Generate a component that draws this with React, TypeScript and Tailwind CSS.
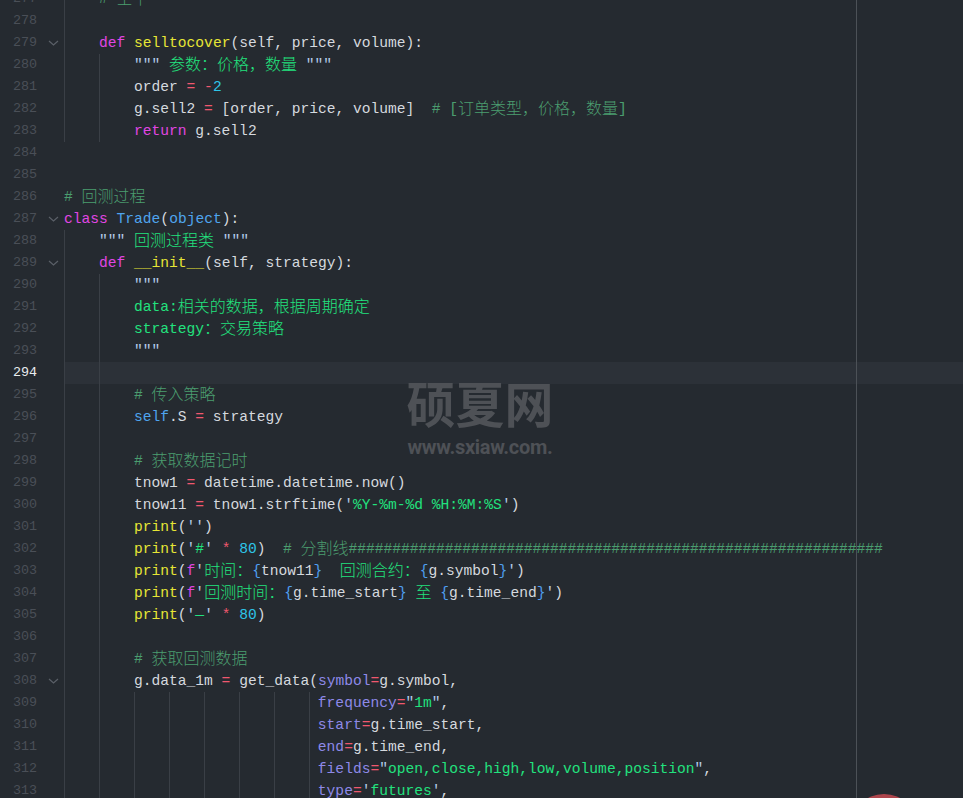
import React from "react";

type Tok = [string, string];

type Line = {
  n: number;
  ind?: number;
  g: number;
  t?: Tok[];
  fold?: boolean;
  hl?: boolean;
};

// token colours
const C: Record<string, string> = {
  w: "text-[#d5d9df]",
  kw: "text-[#e146e3]",
  fn: "text-[#e7e635]",
  op: "text-[#f0586e]",
  num: "text-[#2ec5e8]",
  s: "text-[#22e27e]",
  q: "text-[#b3cbe8]",
  cm: "text-[#4b9d6f]",
  cl: "text-[#4fa5ee]",
  br: "text-[#4f9ff0]",
  arg: "text-[#8e89e8]",
};

const GUIDE_W: Record<number, string> = {
  1: "w-[1ch]",
  2: "w-[2ch]",
  3: "w-[3ch]",
  4: "w-[4ch]",
};

const lines: Line[] = [
  { n: 277, ind: 4, g: 1, t: [["# 空平", "cm"]] },
  { n: 278, g: 1 },
  {
    n: 279,
    ind: 4,
    g: 1,
    fold: true,
    t: [
      ["def", "kw"],
      [" ", "w"],
      ["selltocover", "fn"],
      ["(self, price, volume):", "w"],
    ],
  },
  {
    n: 280,
    ind: 8,
    g: 2,
    t: [
      ['"""', "q"],
      [" 参数：价格，数量 ", "s"],
      ['"""', "q"],
    ],
  },
  {
    n: 281,
    ind: 8,
    g: 2,
    t: [
      ["order ", "w"],
      ["=", "op"],
      [" ", "w"],
      ["-", "op"],
      ["2", "num"],
    ],
  },
  {
    n: 282,
    ind: 8,
    g: 2,
    t: [
      ["g.sell2 ", "w"],
      ["=", "op"],
      [" [order, price, volume]  ", "w"],
      ["# [订单类型，价格，数量]", "cm"],
    ],
  },
  {
    n: 283,
    ind: 8,
    g: 2,
    t: [
      ["return", "kw"],
      [" g.sell2", "w"],
    ],
  },
  { n: 284, g: 0 },
  { n: 285, g: 0 },
  { n: 286, ind: 0, g: 0, t: [["# 回测过程", "cm"]] },
  {
    n: 287,
    ind: 0,
    g: 0,
    fold: true,
    t: [
      ["class", "kw"],
      [" ", "w"],
      ["Trade", "cl"],
      ["(", "w"],
      ["object", "cl"],
      ["):", "w"],
    ],
  },
  {
    n: 288,
    ind: 4,
    g: 1,
    t: [
      ['"""', "q"],
      [" 回测过程类 ", "s"],
      ['"""', "q"],
    ],
  },
  {
    n: 289,
    ind: 4,
    g: 1,
    fold: true,
    t: [
      ["def", "kw"],
      [" ", "w"],
      ["__init__", "fn"],
      ["(self, strategy):", "w"],
    ],
  },
  { n: 290, ind: 8, g: 2, t: [['"""', "q"]] },
  { n: 291, ind: 8, g: 2, t: [["data:相关的数据，根据周期确定", "s"]] },
  { n: 292, ind: 8, g: 2, t: [["strategy：交易策略", "s"]] },
  { n: 293, ind: 8, g: 2, t: [['"""', "q"]] },
  { n: 294, g: 2, hl: true },
  { n: 295, ind: 8, g: 2, t: [["# 传入策略", "cm"]] },
  {
    n: 296,
    ind: 8,
    g: 2,
    t: [
      ["self", "cl"],
      [".S ", "w"],
      ["=", "op"],
      [" strategy", "w"],
    ],
  },
  { n: 297, g: 2 },
  { n: 298, ind: 8, g: 2, t: [["# 获取数据记时", "cm"]] },
  {
    n: 299,
    ind: 8,
    g: 2,
    t: [
      ["tnow1 ", "w"],
      ["=", "op"],
      [" datetime.datetime.now()", "w"],
    ],
  },
  {
    n: 300,
    ind: 8,
    g: 2,
    t: [
      ["tnow11 ", "w"],
      ["=", "op"],
      [" tnow1.strftime(", "w"],
      ["'", "q"],
      ["%Y-%m-%d %H:%M:%S", "s"],
      ["'", "q"],
      [")", "w"],
    ],
  },
  {
    n: 301,
    ind: 8,
    g: 2,
    t: [
      ["print", "fn"],
      ["(", "w"],
      ["''", "q"],
      [")", "w"],
    ],
  },
  {
    n: 302,
    ind: 8,
    g: 2,
    t: [
      ["print", "fn"],
      ["(", "w"],
      ["'", "q"],
      ["#", "s"],
      ["'", "q"],
      [" ", "w"],
      ["*", "op"],
      [" ", "w"],
      ["80", "num"],
      [")  ", "w"],
      ["# 分割线" + "#".repeat(61), "cm"],
    ],
  },
  {
    n: 303,
    ind: 8,
    g: 2,
    t: [
      ["print", "fn"],
      ["(", "w"],
      ["f", "kw"],
      ["'", "q"],
      ["时间：", "s"],
      ["{", "br"],
      ["tnow11", "w"],
      ["}", "br"],
      ["  回测合约：", "s"],
      ["{", "br"],
      ["g.symbol", "w"],
      ["}", "br"],
      ["'", "q"],
      [")", "w"],
    ],
  },
  {
    n: 304,
    ind: 8,
    g: 2,
    t: [
      ["print", "fn"],
      ["(", "w"],
      ["f", "kw"],
      ["'", "q"],
      ["回测时间：", "s"],
      ["{", "br"],
      ["g.time_start", "w"],
      ["}", "br"],
      [" 至 ", "s"],
      ["{", "br"],
      ["g.time_end", "w"],
      ["}", "br"],
      ["'", "q"],
      [")", "w"],
    ],
  },
  {
    n: 305,
    ind: 8,
    g: 2,
    t: [
      ["print", "fn"],
      ["(", "w"],
      ["'", "q"],
      ["—", "s"],
      ["'", "q"],
      [" ", "w"],
      ["*", "op"],
      [" ", "w"],
      ["80", "num"],
      [")", "w"],
    ],
  },
  { n: 306, g: 2 },
  { n: 307, ind: 8, g: 2, t: [["# 获取回测数据", "cm"]] },
  {
    n: 308,
    ind: 8,
    g: 2,
    fold: true,
    t: [
      ["g.data_1m ", "w"],
      ["=", "op"],
      [" get_data(", "w"],
      ["symbol", "arg"],
      ["=", "op"],
      ["g.symbol,", "w"],
    ],
  },
  {
    n: 309,
    ind: 29,
    g: 8,
    t: [
      ["frequency", "arg"],
      ["=", "op"],
      ['"', "q"],
      ["1m", "s"],
      ['"', "q"],
      [",", "w"],
    ],
  },
  {
    n: 310,
    ind: 29,
    g: 8,
    t: [
      ["start", "arg"],
      ["=", "op"],
      ["g.time_start,", "w"],
    ],
  },
  {
    n: 311,
    ind: 29,
    g: 8,
    t: [
      ["end", "arg"],
      ["=", "op"],
      ["g.time_end,", "w"],
    ],
  },
  {
    n: 312,
    ind: 29,
    g: 8,
    t: [
      ["fields", "arg"],
      ["=", "op"],
      ['"', "q"],
      ["open,close,high,low,volume,position", "s"],
      ['"', "q"],
      [",", "w"],
    ],
  },
  {
    n: 313,
    ind: 29,
    g: 8,
    t: [
      ["type", "arg"],
      ["=", "op"],
      ["'", "q"],
      ["futures", "s"],
      ["'", "q"],
      [",", "w"],
    ],
  },
];

// CJK runs get their own font at a full 16px cell, like the editor draws them
const CJK = /([\u2E80-\u9FFF\u3000-\u303F\uFF00-\uFFEF]+)/;

function Text({ text, cls }: { text: string; cls: string }) {
  const parts = text.split(CJK).filter((p) => p !== "");
  return (
    <>
      {parts.map((p, i) =>
        CJK.test(p) ? (
          <span
            key={i}
            className={`${cls} inline-block h-[22px] align-top font-['Noto_Sans_CJK_SC',sans-serif] text-[16px] font-light leading-[19px]`}
          >
            {p}
          </span>
        ) : (
          <span key={i} className={cls}>
            {p}
          </span>
        )
      )}
    </>
  );
}

function Chevron() {
  return (
    <svg width="11" height="6" viewBox="0 0 11 6" className="block">
      <polyline
        points="1,1 5.5,5 10,1"
        fill="none"
        stroke="#5b6068"
        strokeWidth="1.2"
      />
    </svg>
  );
}

function Row({ line }: { line: Line }) {
  const ind = line.ind ?? 0;
  const guides = Array.from({ length: line.g }, (_, i) =>
    line.t ? Math.min(4, ind - 4 * i) : 4
  );
  const used = guides.reduce((a, b) => a + b, 0);
  const rest = line.t ? " ".repeat(Math.max(0, ind - used)) : "";

  return (
    <div className="flex h-[22px] leading-[22px]">
      <div className="flex w-16 shrink-0 items-center">
        <span
          className={`w-[37px] text-right font-['Liberation_Mono',monospace] text-[13.4px] ${
            line.hl ? "text-[#e9ecef]" : "text-[#4a4f57]"
          }`}
        >
          {line.n}
        </span>
        <span className="ml-[11px] flex w-[11px] items-center">
          {line.fold && <Chevron />}
        </span>
      </div>
      <div
        className={`flex-1 whitespace-pre font-['Liberation_Mono','Noto_Sans_CJK_SC',monospace] text-[14.6px] ${
          line.hl ? "bg-[#2c3138]" : ""
        }`}
      >
        {guides.map((w, i) => (
          <span
            key={i}
            className={`inline-block h-[22px] align-top border-l border-[#3a3f46] ${GUIDE_W[w]}`}
          />
        ))}
        {rest}
        {line.t?.map((tk, i) => (
          <Text key={i} text={tk[0]} cls={C[tk[1]]} />
        ))}
      </div>
    </div>
  );
}

export default function App() {
  return (
    <div className="relative h-[798px] w-[963px] overflow-hidden bg-[#252a30]">
      <div className="-mt-3 flex flex-col">
        {lines.map((l) => (
          <Row key={l.n} line={l} />
        ))}
      </div>

      {/* column ruler */}
      <div className="pointer-events-none absolute top-0 bottom-0 left-[856px] w-px bg-[#4c5157]" />

      {/* watermark */}
      <div className="pointer-events-none absolute left-[400px] top-[372px] flex w-[160px] flex-col items-center">
        <span className="font-['Noto_Sans_CJK_SC',sans-serif] text-[49px] font-bold leading-[60px] text-[#4e5156]">
          硕夏网
        </span>
        <span className="mt-[4px] font-['Roboto',sans-serif] text-[20px] font-bold leading-[22px] tracking-[-0.3px] text-[#4e5156]">
          www.sxiaw.com.
        </span>
      </div>

      {/* red blob at the bottom edge */}
      <div className="pointer-events-none absolute left-[850px] top-[794px] h-[68px] w-[68px] rounded-full bg-[#ad454c]" />
    </div>
  );
}
